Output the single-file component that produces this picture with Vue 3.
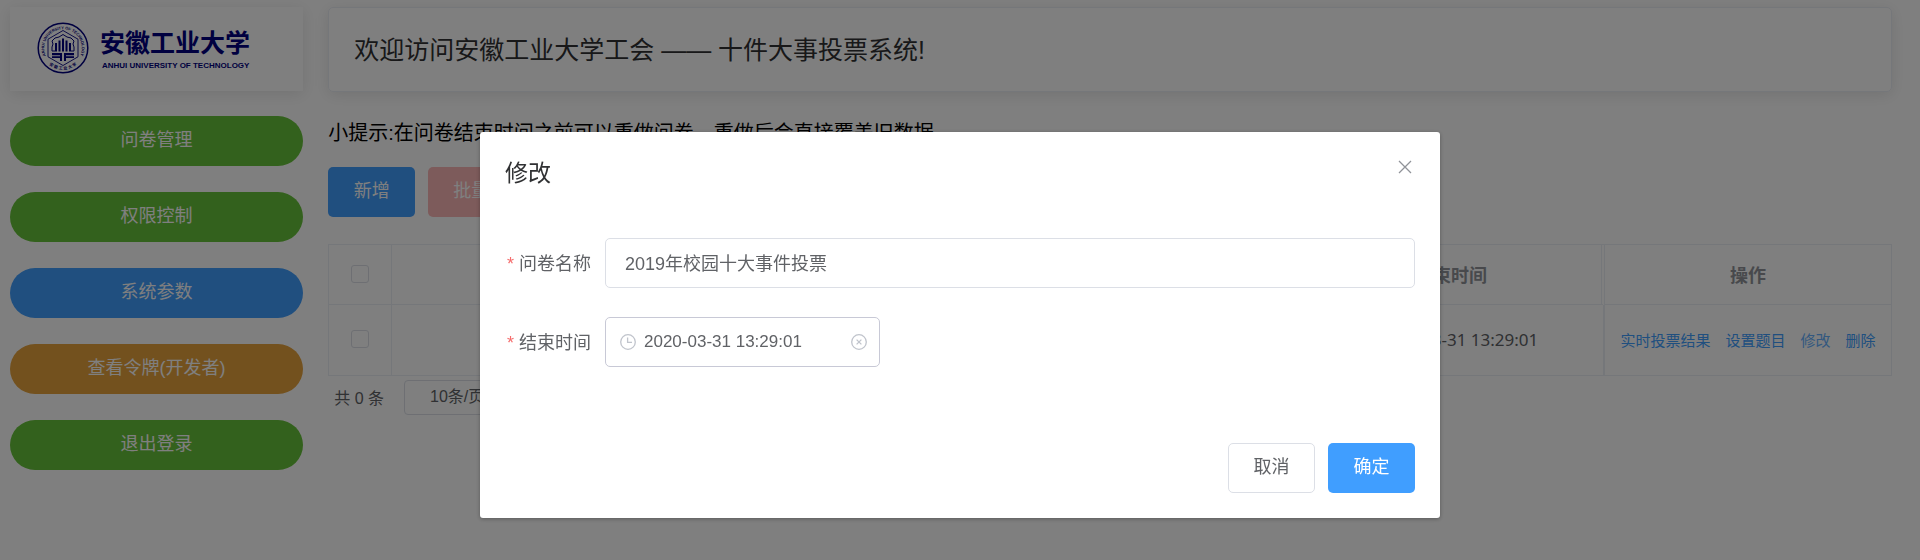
<script setup>
import { ref } from 'vue'

const menu = [
  { text: '问卷管理', kind: 'success' },
  { text: '权限控制', kind: 'success' },
  { text: '系统参数', kind: 'primary' },
  { text: '查看令牌(开发者)', kind: 'warning' },
  { text: '退出登录', kind: 'success' },
]
const actions = ['实时投票结果', '设置题目', '修改', '删除']
const name = ref('2019年校园十大事件投票')
const endTime = ref('2020-03-31 13:29:01')
</script>

<template>
  <div class="page">
    <aside class="side">
      <div class="logo">
        <svg class="seal" viewBox="0 0 52 52" aria-hidden="true">
          <defs>
            <path id="ring-top" d="M9.2 34.5 A18.8 18.8 0 1 1 42.8 34.5" />
            <path id="ring-bottom" d="M8.5 39 A22 22 0 0 0 43.5 39" />
          </defs>
          <circle cx="26" cy="26" r="24.8" fill="none" stroke="#000080" stroke-width="1.5" />
          <text class="ring"><textPath href="#ring-top" startOffset="50%" text-anchor="middle">ANHUI UNIVERSITY OF TECHNOLOGY</textPath></text>
          <text class="ring"><textPath href="#ring-bottom" startOffset="50%" text-anchor="middle">安 徽 工 业 大 学</textPath></text>
          <path d="M26 8.5 L41 17.2 V34.8 L26 43.5 L11 34.8 V17.2 Z" fill="none" stroke="#000080" stroke-width="0.9" />
          <path d="M18 29 H15 V25 L16 22 L15 19 L18 16 L22 15 L26 12.5 L30 15 L34 16 L37 19 L36 22 L37 25 V29 H34" fill="none" stroke="#000080" stroke-width="1" />
          <path d="M18 21h2v8.5h-2z M21.5 18.5h2v11h-2z M25 16.5h2v13h-2z M28.5 18.5h2v11h-2z M32 21h2v8.5h-2z" fill="#000080" />
          <path d="M15 31h10v2.2H15z M27 31h10v2.2H27z M15 34.2h8v1.8h-8z M29 34.2h8v1.8h-8z M23 33h2v6h-2z M27 33h2v6h-2z" fill="#000080" />
        </svg>
        <div class="wordmark">
          <span class="cn">安徽工业大学</span>
          <span class="en">ANHUI UNIVERSITY OF TECHNOLOGY</span>
        </div>
      </div>
      <nav class="menu">
        <button v-for="m in menu" :key="m.text" type="button" class="btn pill" :class="m.kind">{{ m.text }}</button>
      </nav>
    </aside>

    <main class="main">
      <header class="welcome">欢迎访问安徽工业大学工会 —— 十件大事投票系统!</header>
      <p class="tip">小提示:在问卷结束时间之前可以重做问卷，重做后会直接覆盖旧数据</p>
      <div class="tools">
        <button type="button" class="btn primary">新增</button>
        <button type="button" class="btn danger" disabled>批量删除</button>
      </div>
      <table class="grid">
        <colgroup>
          <col class="c-check" /><col /><col class="c-time" /><col class="c-ops" />
        </colgroup>
        <thead>
          <tr>
            <th><input type="checkbox" aria-label="全选" /></th>
            <th></th>
            <th class="edge">结束时间</th>
            <th>操作</th>
          </tr>
        </thead>
        <tbody>
          <tr>
            <td><input type="checkbox" aria-label="选择" /></td>
            <td></td>
            <td class="time">2020-03-31 13:29:01</td>
            <td>
              <div class="links">
                <button v-for="a in actions" :key="a" type="button" class="link" :class="{ active: a === '修改' }">{{ a }}</button>
              </div>
            </td>
          </tr>
        </tbody>
      </table>
      <div class="pager">
        <span>共 0 条</span>
        <select aria-label="每页条数"><option>10条/页</option></select>
      </div>
    </main>

    <div class="mask">
      <form class="dialog" role="dialog" aria-modal="true" aria-labelledby="dlg-title" @submit.prevent>
        <div class="dlg-head">
          <h2 id="dlg-title">修改</h2>
          <button type="button" class="close" aria-label="关闭">
            <svg viewBox="0 0 14 14"><path d="M1 1 L13 13 M13 1 L1 13" fill="none" stroke="#909399" stroke-width="1.3" /></svg>
          </button>
        </div>
        <div class="dlg-body">
          <div class="row">
            <label for="f-name">问卷名称</label>
            <input id="f-name" v-model="name" class="text" type="text" />
          </div>
          <div class="row">
            <label for="f-time">结束时间</label>
            <div class="date">
              <svg viewBox="0 0 16 16"><circle cx="8" cy="8" r="7.3" /><path d="M7.6 3.6 V8.4 H12" /></svg>
              <input id="f-time" v-model="endTime" type="text" />
              <button type="button" class="clear" aria-label="清除">
                <svg viewBox="0 0 16 16"><circle cx="8" cy="8" r="7.3" /><path d="M5.6 5.6 L10.4 10.4 M10.4 5.6 L5.6 10.4" /></svg>
              </button>
            </div>
          </div>
        </div>
        <div class="dlg-foot">
          <button type="button" class="btn plain">取消</button>
          <button type="submit" class="btn primary">确定</button>
        </div>
      </form>
    </div>
  </div>
</template>

<style>
body {
  background: #fff;
  overflow: hidden;
}
</style>

<style scoped>
.page,
.page * {
  box-sizing: border-box;
}
.page {
  display: grid;
  grid-template-columns: minmax(0, 3fr) minmax(0, 16fr);
  gap: 25px;
  align-items: start;
  padding: 7px 28px 0 10px;
  font-family: "Liberation Sans", "Noto Sans CJK SC", sans-serif;
  font-size: 18px;
  color: #606266;
}
.page button,
.page input,
.page select {
  font-family: inherit;
  font-size: inherit;
  color: inherit;
  margin: 0;
}
.logo {
  display: flex;
  align-items: flex-start;
  gap: 11px;
  height: 84px;
  padding: 15px 27px 0;
  box-shadow: 0 3px 15px rgba(0, 0, 0, 0.1);
}
.seal {
  flex: none;
  width: 52px;
  height: 52px;
}
.ring {
  font-size: 4px;
  font-weight: 700;
  fill: #000080;
}
.wordmark {
  display: flex;
  flex-direction: column;
  padding-top: 8px;
  white-space: nowrap;
  color: #000080;
  font-weight: 700;
}
.cn {
  font-size: 25px;
  line-height: 26px;
}
.en {
  padding-left: 2px;
  font-size: 8px;
  line-height: 20px;
}
.menu {
  display: flex;
  flex-direction: column;
  gap: 26px;
  margin-top: 25px;
}
.btn {
  min-width: 87px;
  height: 50px;
  padding: 0 24px 2px;
  border: 1px solid transparent;
  border-radius: 5px;
  line-height: 24px;
}
.page .btn {
  color: #fff;
}
.pill {
  width: 100%;
  border-radius: 25px;
}
.success { background: #67c23a; }
.primary { background: #409eff; }
.warning { background: #e6a23c; }
.danger { background: #fab6b6; }
.page .plain {
  background: #fff;
  border-color: #dcdfe6;
  color: #606266;
}
.welcome {
  height: 85px;
  padding: 0 25px;
  border: 1px solid #ebeef5;
  border-radius: 5px;
  box-shadow: 0 3px 15px rgba(0, 0, 0, 0.1);
  font-size: 25px;
  line-height: 85px;
  white-space: nowrap;
  color: #303133;
}
.tip {
  margin: 26px 0 19px;
  font-size: 20px;
  line-height: 30px;
  color: #000;
}
.tools {
  display: flex;
  gap: 13px;
  margin-bottom: 27px;
}
.grid {
  width: 100%;
  table-layout: fixed;
  border-collapse: separate;
  border-spacing: 0;
  border: 1px solid #ebeef5;
  border-width: 1px 0 0 1px;
}
.c-check { width: 63px; }
.c-time { width: 304px; }
.c-ops { width: 287px; }
.grid th,
.grid td {
  padding: 0;
  text-align: center;
  border: 1px solid #ebeef5;
  border-width: 0 1px 1px 0;
}
.grid th {
  height: 60px;
  padding-bottom: 2px;
  color: #909399;
  font-weight: 700;
}
.grid td {
  height: 71px;
  padding-bottom: 2px;
}
.grid .edge { border-right: 4px double #ebeef5; }
.grid .time {
  padding-left: 12px;
  border-right-width: 2px;
  font-family: "Noto Sans", sans-serif;
  font-size: 17px;
}
.grid input {
  appearance: none;
  display: block;
  width: 18px;
  height: 18px;
  margin: 0 auto;
  border: 1px solid #dcdfe6;
  border-radius: 3px;
  background: #fff;
}
.links {
  display: flex;
  justify-content: center;
  gap: 15px;
}
.page .link {
  padding: 0;
  border: 0;
  background: none;
  font-size: 15px;
  color: #409eff;
}
.page .link.active { color: #66b1ff; }
.pager {
  display: flex;
  align-items: center;
  gap: 20px;
  padding: 4px 6px;
  font-size: 16px;
}
.pager span { padding-bottom: 2px; }
.pager select {
  appearance: none;
  width: 125px;
  height: 35px;
  padding: 0 25px 2px;
  border: 1px solid #dcdfe6;
  border-radius: 4px;
  background: #fff;
}
.mask {
  position: fixed;
  inset: 0;
  padding-top: 132px;
  background: rgba(0, 0, 0, 0.5);
}
.dialog {
  width: 50%;
  margin: 0 auto;
  padding: 25px;
  border-radius: 3px;
  background: #fff;
  box-shadow: 0 1px 4px rgba(0, 0, 0, 0.3);
}
.dlg-head {
  display: flex;
  justify-content: space-between;
  align-items: flex-start;
}
.dlg-head h2 {
  margin: 0;
  font-size: 23px;
  font-weight: 400;
  line-height: 32px;
  color: #303133;
}
.close {
  width: 20px;
  height: 20px;
  padding: 3px;
  border: 0;
  background: none;
}
.close svg,
.date svg {
  display: block;
  width: 100%;
}
.dlg-body {
  display: grid;
  gap: 29px;
  padding: 49px 0 76px;
}
.row {
  display: flex;
  align-items: center;
}
.row label {
  flex: none;
  width: 100px;
  padding: 0 14px 3px 0;
  text-align: right;
  white-space: nowrap;
}
.row label::before {
  content: "*";
  margin-right: 5px;
  color: #f56c6c;
}
.text,
.date {
  height: 50px;
  border: 1px solid #dcdfe6;
  border-radius: 5px;
  background: #fff;
}
.text {
  flex: 1;
  min-width: 0;
  padding: 0 19px 3px;
}
.date {
  display: flex;
  align-items: center;
  gap: 8px;
  width: 275px;
  padding: 0 12px 0 14px;
  border-color: #c8c9d6;
}
.date > svg,
.clear {
  flex: none;
  width: 16px;
  height: 16px;
}
.date svg {
  fill: none;
  stroke: #c0c4cc;
  stroke-width: 1.3;
}
.page .date input {
  flex: 1;
  min-width: 0;
  padding: 0;
  border: 0;
  outline: 0;
  font-size: 17px;
  background: none;
}
.clear {
  padding: 0;
  border: 0;
  background: none;
}
.dlg-foot {
  display: flex;
  justify-content: flex-end;
  gap: 13px;
}
</style>
